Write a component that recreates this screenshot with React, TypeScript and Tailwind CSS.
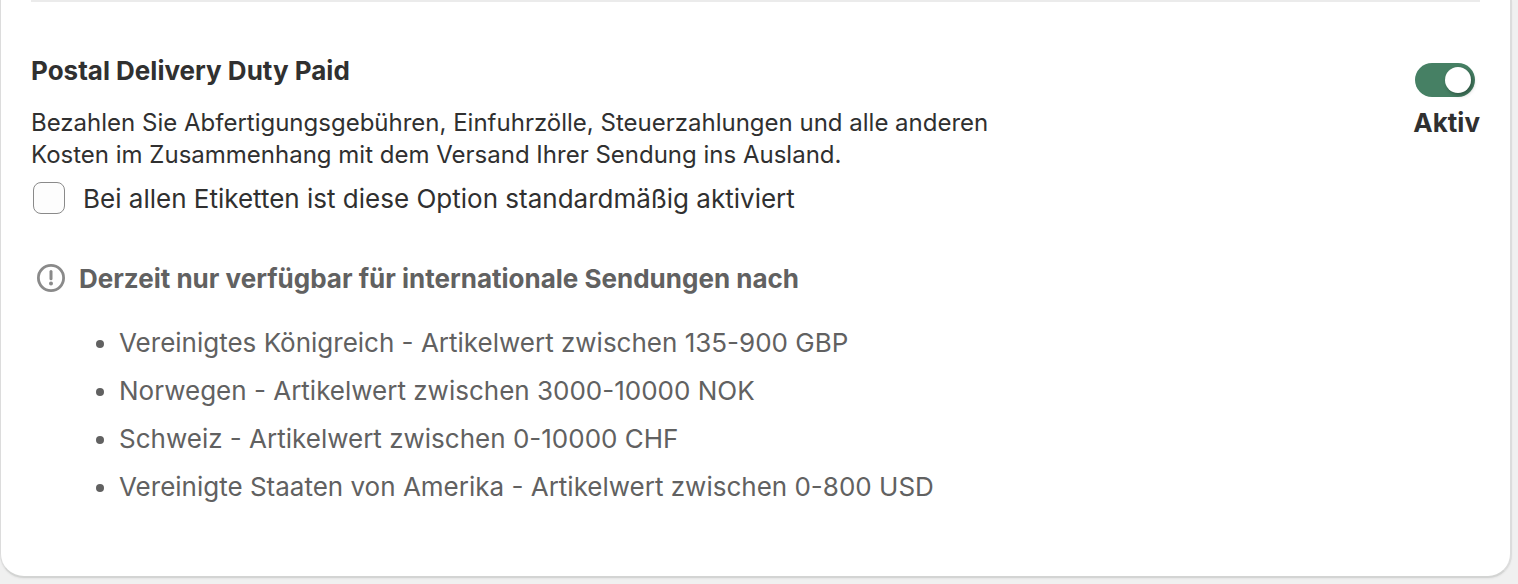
import { useState } from "react";

const destinations = [
  "Vereinigtes Königreich - Artikelwert zwischen 135-900 GBP",
  "Norwegen - Artikelwert zwischen 3000-10000 NOK",
  "Schweiz - Artikelwert zwischen 0-10000 CHF",
  "Vereinigte Staaten von Amerika - Artikelwert zwischen 0-800 USD",
];

function AlertIcon() {
  return (
    <svg viewBox="0 0 28 28" className="size-7 shrink-0" fill="none" stroke="#8a8a8a" strokeWidth="3" aria-hidden="true">
      <circle cx="14" cy="14" r="12.6" strokeWidth="2.8" />
      <path d="M14 7.5v7.2" strokeLinecap="round" />
      <circle cx="14" cy="19.5" r="2" fill="#8a8a8a" stroke="none" />
    </svg>
  );
}

export default function App() {
  const [active, setActive] = useState(true);
  return (
    <div className="min-h-screen bg-[#f0f0f0] pr-1.5 pb-1.5 font-['Inter',sans-serif] text-[#303030]">
      <section className="rounded-b-3xl border-r-2 border-b-2 border-l border-[#dcdcdc] border-b-[#d3d4d3] bg-white px-[30px] pb-[69px] shadow-xs">
        <hr className="border-t-2 border-[#ebebeb]" />
        <div className="flex items-start justify-between pt-[49px]">
          <div>
            <h2 className="text-[26px] leading-10 font-bold">Postal Delivery Duty Paid</h2>
            <p className="mt-4 max-w-[1000px] text-2xl leading-8">
              Bezahlen Sie Abfertigungsgebühren, Einfuhrzölle, Steuerzahlungen und alle anderen Kosten im Zusammenhang mit dem Versand Ihrer Sendung ins Ausland.
            </p>
            <label className="mt-2 flex items-start gap-[18px] pl-0.5 text-[26px] leading-10">
              <input type="checkbox" className="mt-[3px] size-8 appearance-none rounded-lg border border-[#8a8a8a] bg-[#fdfdfd] checked:bg-[#303030]" />
              Bei allen Etiketten ist diese Option standardmäßig aktiviert
            </label>
          </div>
          <div className="flex flex-col items-start pt-3">
            <button
              type="button"
              role="switch"
              aria-checked={active}
              aria-labelledby="status"
              onClick={() => setActive(!active)}
              className="ml-0.5 flex h-[34px] w-[60px] items-center rounded-full bg-[#468064] px-1 aria-checked:justify-end"
            >
              <span className="size-[26px] rounded-full bg-white shadow-[2px_2px_4px_rgba(0,0,0,0.35)]" />
            </button>
            <span id="status" className="mt-1.5 text-[26px] leading-10 font-bold">Aktiv</span>
          </div>
        </div>
        <div className="mt-10 flex items-start gap-3.5 pl-1.5 text-[26px] leading-10 font-bold text-[#616161]">
          <span className="pt-[5px]"><AlertIcon /></span>
          <h3>Derzeit nur verfügbar für internationale Sendungen nach</h3>
        </div>
        <ul className="mt-6 flex list-disc flex-col gap-2 pl-[88px] text-[26px] leading-10 text-[#616161]">
          {destinations.map((item) => (
            <li key={item}>{item}</li>
          ))}
        </ul>
      </section>
    </div>
  );
}
